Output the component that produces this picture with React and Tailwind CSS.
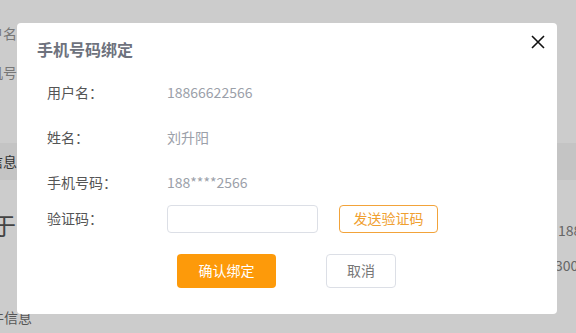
import React from "react";

const font = { fontFamily: '"Noto Sans CJK SC", "Noto Sans", sans-serif' };

function Row({ label, children }) {
  return (
    <div className="flex h-[45px] items-center">
      <div className="w-[120px] text-[14px] text-[#555]">{label}</div>
      <div className="text-[14px] text-[#9ba0a9]">{children}</div>
    </div>
  );
}

export default function App() {
  return (
    <div className="relative h-[333px] w-[576px] overflow-hidden bg-[#cccccc]" style={font}>
      {/* background page content */}
      <div className="flex h-full flex-col">
        <div className="ml-[-25px] mt-[22px] h-[22px] text-[14px] leading-[22px] text-[#777]">用户名</div>
        <div className="ml-[-25px] mt-[17px] h-[22px] text-[14px] leading-[22px] text-[#777]">手机号</div>
        <div className="mt-[60px] flex h-[37px] items-center bg-[#c4c4c4]">
          <span className="ml-[-11px] text-[14px] text-[#333]">信息</span>
        </div>
        <div className="flex h-[100px] items-start">
          <div className="flex-1">
            <div className="ml-[-8px] mt-[30px] text-[24px] leading-[30px] text-[#444]">于</div>
          </div>
          <div className="w-[19px] pt-[40px] text-[14px] leading-[20px] text-[#666]">
            <div className="ml-[1px] whitespace-nowrap">188</div>
            <div className="ml-[-2px] mt-[15px] whitespace-nowrap">300</div>
          </div>
        </div>
        <div className="ml-[-10px] mt-[27px] text-[14px] text-[#555]">件信息</div>
      </div>

      {/* modal */}
      <div className="absolute left-[17px] top-[23px] h-[291px] w-[540px] rounded-[4px] bg-white">
        <button className="absolute right-[10px] top-[10px] flex h-[18px] w-[18px] items-center justify-center">
          <svg width="16" height="16" viewBox="0 0 16 16">
            <path d="M2 2L14 14M14 2L2 14" stroke="#111" strokeWidth="1.6" fill="none" />
          </svg>
        </button>
        <div className="flex flex-col pl-[20px] pt-[14px]">
          <div className="h-[24px] text-[16px] font-bold leading-[24px] text-[#6e727d]">手机号码绑定</div>
        </div>
        <div className="mt-[8.5px] flex flex-col pl-[30px]">
          <Row label="用户名：">18866622566</Row>
          <Row label="姓名：">刘升阳</Row>
          <Row label="手机号码：">188****2566</Row>
          <div className="flex h-[28px] items-center">
            <div className="w-[120px] text-[14px] text-[#555]">验证码：</div>
            <input className="h-[28px] w-[151px] rounded-[4px] border border-[#dcdfe6] outline-none" />
            <button className="ml-[21px] h-[28px] w-[99px] rounded-[4px] border border-[#f2a33a] text-[14px] text-[#f0a030]">
              发送验证码
            </button>
          </div>
          <div className="mt-[21px] flex pl-[130px]">
            <button className="h-[34px] w-[99px] rounded-[4px] bg-[#fd9a0a] text-[14px] text-white">确认绑定</button>
            <button className="ml-[50px] h-[34px] w-[70px] rounded-[4px] border border-[#dcdfe6] bg-white text-[14px] text-[#777]">
              取消
            </button>
          </div>
        </div>
      </div>
    </div>
  );
}
